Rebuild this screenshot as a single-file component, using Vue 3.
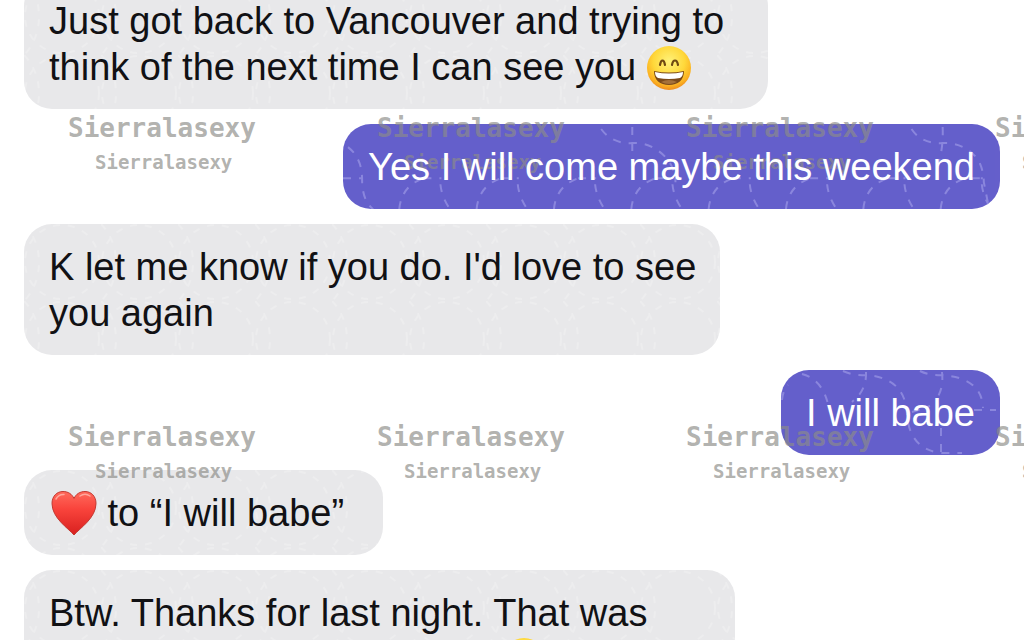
<script setup>
const rows = [0, 1]
const columns = [0, 1, 2, 3]
const arches = [0, 1, 2, 3, 4, 5, 6, 7]
</script>

<template>
  <main class="chat">
    <svg class="defs" aria-hidden="true">
      <defs>
        <radialGradient id="face" cx="50%" cy="35%" r="65%">
          <stop offset="0" stop-color="#fff27a" />
          <stop offset="0.55" stop-color="#ffd83a" />
          <stop offset="0.85" stop-color="#fbb122" />
          <stop offset="1" stop-color="#ee8b1c" />
        </radialGradient>
        <linearGradient id="heart" x1="0" y1="0" x2="0" y2="1">
          <stop offset="0" stop-color="#ff6a5c" />
          <stop offset="0.4" stop-color="#f9443c" />
          <stop offset="1" stop-color="#d8201f" />
        </linearGradient>
        <pattern id="rings" width="77" height="77" patternUnits="userSpaceOnUse">
          <g fill="none" stroke="#ffffff" stroke-width="2" stroke-dasharray="7 8" opacity="0.2">
            <circle cx="38" cy="38" r="37" />
            <path d="M0 0C20 20 20 57 0 77" />
          </g>
        </pattern>
        <symbol id="grin" viewBox="0 0 44 44">
          <circle cx="22" cy="22" r="22" fill="url(#face)" />
          <path d="M13 19C14 13 17 13 18 19M25 19C26 13 30 13 31 19" fill="none" stroke="#6f4a12" stroke-width="2.200" stroke-linecap="round" />
          <path d="M7 25Q22 28 37 25C37 34 31 39 22 39S7 34 7 25Z" fill="#7b4a1a" />
          <path d="M8 26Q22 29 36 26C36 29 35 31 33 32Q22 34 11 32C9 31 8 29 8 26Z" fill="#ffffff" />
          <path d="M14 36Q22 32 30 36Q22 40 14 36Z" fill="#a5713a" />
        </symbol>
      </defs>
    </svg>

    <ol class="messages">
      <li class="bubble received first">
        <svg class="pattern" aria-hidden="true"><rect width="100%" height="100%" fill="url(#rings)" /></svg>
        <p>Just got back to Vancouver and trying to<br />think of the next time I can see you <svg class="emoji" role="img" aria-label="grinning face"><use href="#grin" /></svg></p>
      </li>
      <li class="bubble sent">
        <svg class="pattern" viewBox="0 0 654 85" preserveAspectRatio="xMaxYMin slice" aria-hidden="true">
          <g class="dashes">
            <path d="M5 23Q19 34 19 55T30 85M0 54H20" />
            <path d="M257 5Q268 20 288 19T323 35Q331 46 331 58M288 3V42" />
            <path d="M566 5Q576 20 597 19T632 35Q638 46 638 58L642 78M597 3Q598 24 592 42M626 54H642" />
            <path v-for="n in arches" :key="n" :transform="`translate(${56 + n * 77} 0)`" d="M0 85Q2 62 24 54M24 54H42M41 60Q42 72 50 84" />
          </g>
        </svg>
        <p>Yes I will come maybe this weekend</p>
      </li>
      <li class="bubble received second">
        <svg class="pattern" aria-hidden="true"><rect width="100%" height="100%" fill="url(#rings)" /></svg>
        <p>K let me know if you do. I'd love to see<br />you again</p>
      </li>
      <li class="bubble sent">
        <svg class="pattern" viewBox="0 0 220 85" preserveAspectRatio="xMaxYMin slice" aria-hidden="true">
          <g class="dashes">
            <path d="M2 30Q3 20 8 15M22 4Q44 10 49 39" />
            <path d="M63 1Q74 6 86 5Q126 8 127 45Q130 80 162 83H182M86 2Q87 20 72 32" />
            <path d="M140 1Q150 6 162 5Q202 8 203 38M162 2Q164 18 156 30M132 42L150 36M194 40H216M161 58V84" />
          </g>
        </svg>
        <p>I will babe</p>
      </li>
      <li class="bubble received reaction">
        <svg class="pattern" aria-hidden="true"><rect width="100%" height="100%" fill="url(#rings)" /></svg>
        <p><svg class="emoji heart" viewBox="0 0 46 46" role="img" aria-label="red heart"><path d="M23 45C17 38 1 28 1 13.500C1 6 6 1.500 12 1.500C17 1.500 21 4 23 8.500C25 4 29 1.500 34 1.500C40 1.500 45 6 45 13.500C45 28 29 38 23 45Z" fill="url(#heart)" stroke="#c23a32" stroke-width="1" /><path d="M5 9Q8 4 13 4.500M29 6Q34 2.500 39 6" fill="none" stroke="#ffa79c" stroke-width="1.500" stroke-linecap="round" /></svg> to “I will babe”</p>
      </li>
      <li class="bubble received last">
        <svg class="pattern" aria-hidden="true"><rect width="100%" height="100%" fill="url(#rings)" /></svg>
        <p>Btw. Thanks for last night. That was<br /><svg class="emoji trailing" role="img" aria-label="grinning face"><use href="#grin" /></svg></p>
      </li>
    </ol>

    <div class="watermarks" aria-hidden="true">
      <div v-for="row in rows" :key="row" class="mark-row">
        <div v-for="column in columns" :key="column" class="mark">
          <span class="mark-large">Sierralasexy</span>
          <span class="mark-small">Sierralasexy</span>
        </div>
      </div>
    </div>
  </main>
</template>

<style>
body {
  background: #ffffff;
}
</style>

<style scoped>
.chat {
  position: relative;
  height: 100vh;
  overflow: hidden;
  background: #ffffff;
  font-family: "Liberation Sans", Arial, sans-serif;
  font-size: 38px;
  line-height: 46px;
  color: #111114;
}
.defs {
  position: absolute;
  width: 0;
  height: 0;
}
.messages {
  display: flex;
  flex-direction: column;
  align-items: flex-start;
  gap: 15px;
  margin: -22px 0 0;
  padding: 0 24px;
  list-style: none;
}
.bubble {
  position: relative;
  box-sizing: border-box;
  padding: 20px 25px 19px;
  border-radius: 28px;
  overflow: hidden;
  white-space: nowrap;
}
.bubble p {
  position: relative;
  z-index: 2;
  margin: 0;
}
.received {
  background: #e8e8ea;
}
.sent {
  align-self: flex-end;
  background: #655fcb;
  color: #ffffff;
}
.first {
  width: calc(100% - 232px);
}
.second {
  width: calc(100% - 280px);
}
.reaction {
  padding-right: 39px;
}
.last {
  width: calc(100% - 265px);
}
.pattern {
  position: absolute;
  inset: 0;
  width: 100%;
  height: 100%;
}
.dashes {
  fill: none;
  stroke: #9490e2;
  stroke-width: 2;
  stroke-dasharray: 8 8;
  opacity: 0.8;
}
.emoji {
  display: inline-block;
  width: 44px;
  height: 44px;
  vertical-align: -10px;
}
.heart {
  width: 46px;
  height: 46px;
  margin-left: 2px;
}
.trailing {
  margin-left: 453px;
}
.watermarks {
  position: absolute;
  z-index: 1;
  top: 112px;
  left: 68px;
  pointer-events: none;
  color: rgba(140, 140, 136, 0.68);
  font-family: "DejaVu Sans Mono", monospace;
  font-weight: bold;
}
.mark-row {
  display: flex;
  height: 309px;
}
.mark {
  display: flex;
  flex: 0 0 309px;
  flex-direction: column;
}
.mark-large {
  font-size: 26px;
  line-height: 32px;
}
.mark-small {
  padding-left: 27px;
  font-size: 19px;
  line-height: 36px;
}
</style>
